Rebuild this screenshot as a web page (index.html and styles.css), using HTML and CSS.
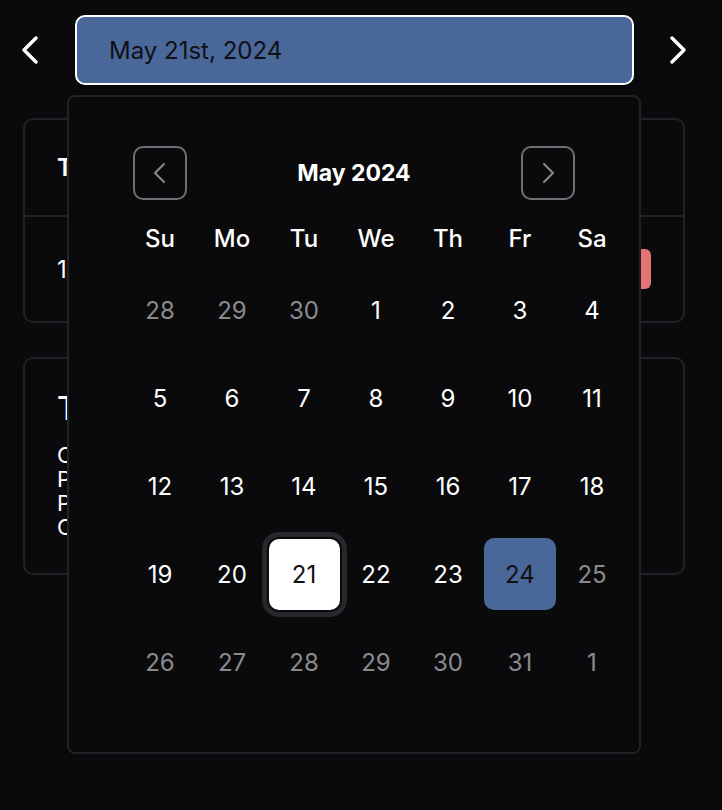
FILE: index.html
```html
<!DOCTYPE html>
<html lang="en">
<head>
<meta charset="utf-8">
<title>Schedule</title>
<link rel="stylesheet" href="styles.css">
</head>
<body>
<div class="top">
  <button class="arrow" aria-label="Previous day">
    <svg width="18" height="28" viewBox="0 0 18 28"><polyline points="15,2 3,14 15,26" fill="none" stroke="#fff" stroke-width="3.4" stroke-linecap="round" stroke-linejoin="round"/></svg>
  </button>
  <div class="date-input">May 21st, 2024</div>
  <button class="arrow" aria-label="Next day">
    <svg width="18" height="28" viewBox="0 0 18 28"><polyline points="3,2 15,14 3,26" fill="none" stroke="#fff" stroke-width="3.4" stroke-linecap="round" stroke-linejoin="round"/></svg>
  </button>
</div>

<main class="content">
  <section class="card">
    <div class="card-head">Tasks</div>
    <div class="card-row">
      <span>10:00</span>
      <span class="badge"></span>
    </div>
  </section>
  <section class="card card-notes">
    <h2 class="notes-title">Today</h2>
    <p class="notes-line">Call</p>
    <p class="notes-line">Plan</p>
    <p class="notes-line">Pay</p>
    <p class="notes-line">Clean</p>
  </section>
</main>

<div class="popover">
  <div class="cal-head">
    <button class="nav-btn" aria-label="Previous month">
      <svg width="20" height="22" viewBox="0 0 20 22"><polyline points="14,2 5,11 14,20" fill="none" stroke="#8a8a8e" stroke-width="2" stroke-linecap="round" stroke-linejoin="round"/></svg>
    </button>
    <div class="cal-title">May 2024</div>
    <button class="nav-btn" aria-label="Next month">
      <svg width="20" height="22" viewBox="0 0 20 22"><polyline points="6,2 15,11 6,20" fill="none" stroke="#8a8a8e" stroke-width="2" stroke-linecap="round" stroke-linejoin="round"/></svg>
    </button>
  </div>
  <div class="cal-grid">
    <div class="wd">Su</div><div class="wd">Mo</div><div class="wd">Tu</div><div class="wd">We</div><div class="wd">Th</div><div class="wd">Fr</div><div class="wd">Sa</div>

    <div class="day"><span class="d out">28</span></div>
    <div class="day"><span class="d out">29</span></div>
    <div class="day"><span class="d out">30</span></div>
    <div class="day"><span class="d">1</span></div>
    <div class="day"><span class="d">2</span></div>
    <div class="day"><span class="d">3</span></div>
    <div class="day"><span class="d">4</span></div>

    <div class="day"><span class="d">5</span></div>
    <div class="day"><span class="d">6</span></div>
    <div class="day"><span class="d">7</span></div>
    <div class="day"><span class="d">8</span></div>
    <div class="day"><span class="d">9</span></div>
    <div class="day"><span class="d">10</span></div>
    <div class="day"><span class="d">11</span></div>

    <div class="day"><span class="d">12</span></div>
    <div class="day"><span class="d">13</span></div>
    <div class="day"><span class="d">14</span></div>
    <div class="day"><span class="d">15</span></div>
    <div class="day"><span class="d">16</span></div>
    <div class="day"><span class="d">17</span></div>
    <div class="day"><span class="d">18</span></div>

    <div class="day"><span class="d">19</span></div>
    <div class="day"><span class="d">20</span></div>
    <div class="day"><span class="d selected">21</span></div>
    <div class="day"><span class="d">22</span></div>
    <div class="day"><span class="d">23</span></div>
    <div class="day"><span class="d today">24</span></div>
    <div class="day"><span class="d out">25</span></div>

    <div class="day"><span class="d out">26</span></div>
    <div class="day"><span class="d out">27</span></div>
    <div class="day"><span class="d out">28</span></div>
    <div class="day"><span class="d out">29</span></div>
    <div class="day"><span class="d out">30</span></div>
    <div class="day"><span class="d out">31</span></div>
    <div class="day"><span class="d out">1</span></div>
  </div>
</div>
</body>
</html>
```

FILE: styles.css
```css
* { box-sizing: border-box; }

html, body {
  margin: 0;
  background: #0a0a0c;
  color: #fff;
  font-family: Inter, "Liberation Sans", sans-serif;
}

button {
  font: inherit;
  background: none;
  border: 0;
  padding: 0;
  color: inherit;
}

.top {
  display: flex;
  align-items: center;
  height: 85px;
  padding: 15px 0 0 21px;
}

.arrow {
  width: 18px;
  height: 28px;
  display: flex;
}

.date-input {
  width: 559px;
  height: 70px;
  margin: 0 35px 0 36px;
  border: 2px solid #fff;
  border-radius: 10px;
  background: #4a6799;
  color: #0f1014;
  font-size: 24px;
  display: flex;
  align-items: center;
  padding-left: 32px;
}

.content {
  display: flex;
  flex-direction: column;
  gap: 34px;
  margin: 33px 37px 0 23px;
}

.card {
  border: 2px solid #222226;
  border-radius: 10px;
}

.card-head {
  height: 97px;
  display: flex;
  align-items: center;
  padding-left: 32px;
  font-size: 24px;
  font-weight: 600;
  border-bottom: 2px solid #222226;
}

.card-row {
  height: 104px;
  display: flex;
  align-items: center;
  justify-content: space-between;
  padding: 0 32px;
  font-size: 24px;
}

.badge {
  width: 40px;
  height: 40px;
  border-radius: 6px;
  background: #e57373;
}

.card-notes {
  height: 218px;
  padding: 32px 32px;
}

.notes-title {
  margin: 0 0 16px;
  font-size: 32px;
  font-weight: 500;
  line-height: 36px;
}

.notes-line {
  margin: 0;
  font-size: 22px;
  line-height: 24px;
}

.popover {
  position: absolute;
  left: 67px;
  top: 95px;
  width: 574px;
  height: 659px;
  background: #0a0a0c;
  border: 2px solid #222226;
  border-radius: 8px;
  padding: 49px 0 0 55px;
}

.cal-head {
  display: flex;
  align-items: center;
  justify-content: space-between;
  width: 442px;
  margin-left: 9px;
}

.nav-btn {
  width: 54px;
  height: 54px;
  border: 2px solid #6f6f73;
  border-radius: 10px;
  display: flex;
  align-items: center;
  justify-content: center;
}

.cal-title {
  font-size: 23px;
  font-weight: 700;
}

.cal-grid {
  display: grid;
  grid-template-columns: repeat(7, 72px);
  grid-template-rows: 48px;
  grid-auto-rows: 88px;
  margin-top: 18px;
}

.wd {
  height: 40px;
  display: flex;
  align-items: center;
  justify-content: center;
  font-size: 24px;
  font-weight: 500;
}

.day {
  display: flex;
  align-items: center;
  justify-content: center;
}

.d {
  width: 72px;
  height: 72px;
  border-radius: 10px;
  display: flex;
  align-items: center;
  justify-content: center;
  font-size: 24px;
}

.d.out { color: #8a8a8e; }

.d.selected {
  background: #fff;
  color: #111;
  width: 71px;
  height: 71px;
  box-shadow: 0 0 0 2px #0a0a0c, 0 0 0 7px #28282c;
}

.d.today {
  background: #4a6799;
  color: #111;
}
```
